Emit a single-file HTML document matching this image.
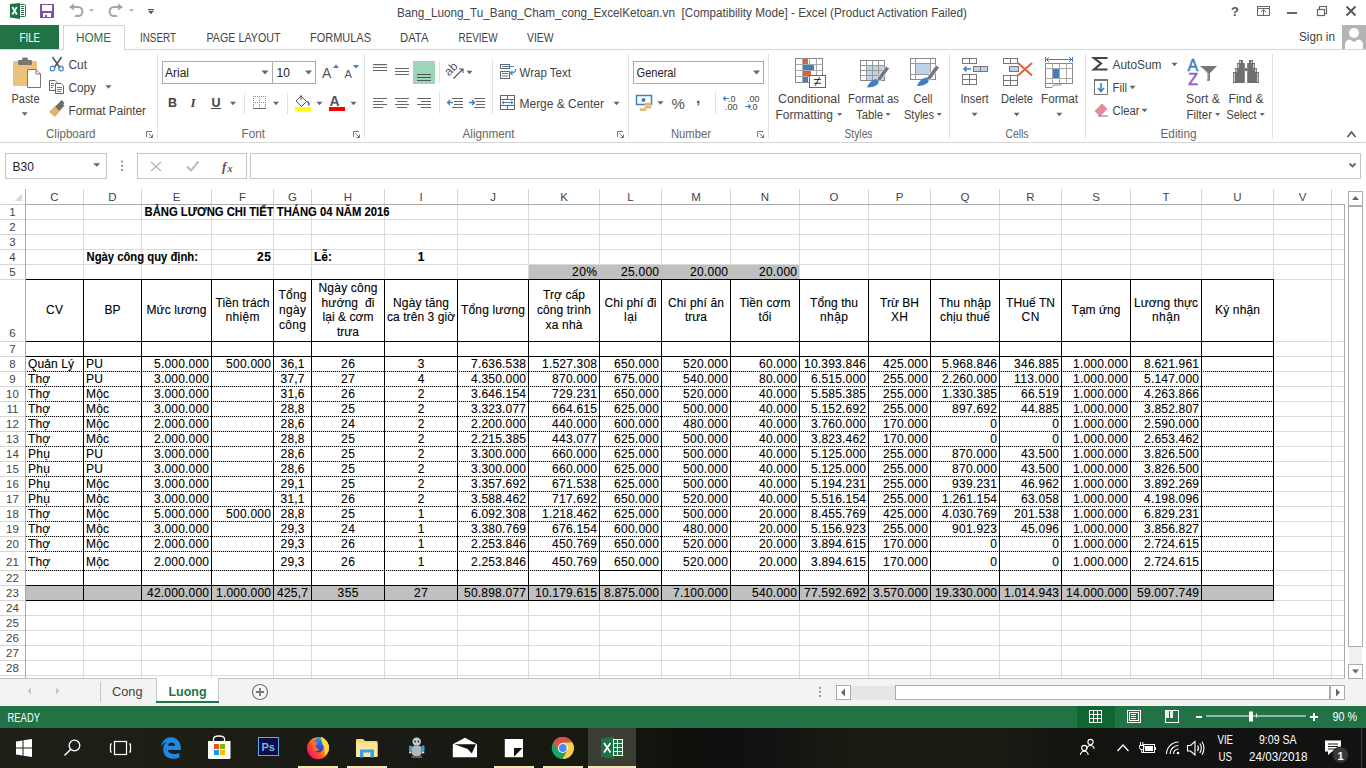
<!DOCTYPE html>
<html><head><meta charset="utf-8"><title>Excel</title>
<style>
html,body{margin:0;padding:0;width:1366px;height:768px;overflow:hidden;background:#fff}
svg{display:block;font-family:"Liberation Sans",sans-serif}
.c text{stroke:#000;stroke-width:0.1px}
</style></head><body>
<svg width="1366" height="768" viewBox="0 0 1366 768">
<rect x="0" y="0" width="1366" height="143" fill="#ffffff" />
<rect x="15.5" y="4.5" width="5" height="12" rx="1" fill="#fff" stroke="#1e7145" stroke-width="1"/>
<rect x="19.5" y="4.5" width="6" height="12" rx="1" fill="#fff" stroke="#1e7145" stroke-width="1"/>
<path d="M21 6.5h3M21 8.5h3M21 10.5h3M21 12.5h3M21 14.5h3" stroke="#1e7145" stroke-width="1"/>
<path d="M10 4 L20 3 V19 L10 17.5 Z" fill="#1e7145"/>
<path d="M12.3 7 L16.8 14.5 M16.8 7 L12.3 14.5" stroke="#fff" stroke-width="1.8"/>
<rect x="40" y="4" width="14" height="14" fill="#8150a8" />
<rect x="42" y="5" width="10" height="6" fill="#fff" />
<rect x="43" y="13" width="8" height="4" fill="#fff" />
<rect x="45" y="15" width="2" height="2" fill="#8150a8" />
<path d="M72 7 H78 A4.5 4.5 0 0 1 78 16 H75" fill="none" stroke="#a6a6a6" stroke-width="2"/>
<path d="M69 7 L74 3.5 L74 10.5 Z" fill="#a6a6a6"/>
<path d="M89.0 9.0 L94.0 9.0 L91.5 12.0 Z" fill="#b3b3b3"/>
<path d="M120 7 H114 A4.5 4.5 0 0 0 114 16 H117" fill="none" stroke="#a6a6a6" stroke-width="2"/>
<path d="M123 7 L118 3.5 L118 10.5 Z" fill="#a6a6a6"/>
<path d="M129.0 9.0 L134.0 9.0 L131.5 12.0 Z" fill="#b3b3b3"/>
<rect x="148" y="9" width="6" height="1" fill="#555" />
<path d="M148.0 10.75 L154.0 10.75 L151 14.25 Z" fill="#555"/>
<text x="397" y="17" font-size="12.5" fill="#444" textLength="570" lengthAdjust="spacingAndGlyphs" >Bang_Luong_Tu_Bang_Cham_cong_ExcelKetoan.vn  [Compatibility Mode] - Excel (Product Activation Failed)</text>
<text x="1235" y="16" font-size="13" fill="#555" text-anchor="middle" font-weight="bold" >?</text>
<rect x="1257.5" y="6.5" width="12" height="9" fill="none" stroke="#666" stroke-width="1"/>
<path d="M1257.5 8.5 H1269.5" stroke="#666"/>
<path d="M1263.5 15 V10 M1261 12 L1263.5 9.5 L1266 12" fill="none" stroke="#666"/>
<rect x="1287" y="12" width="10" height="2" fill="#666" />
<rect x="1317.5" y="9.5" width="7" height="6" fill="none" stroke="#666" stroke-width="1.2"/>
<path d="M1319.5 9.5 V6.5 H1326.5 V13.5 H1324.5" fill="none" stroke="#666" stroke-width="1.2"/>
<path d="M1346.5 6.5 L1355.5 15.5 M1355.5 6.5 L1346.5 15.5" stroke="#555" stroke-width="1.8"/>
<rect x="0" y="25" width="59" height="25" fill="#217346" />
<text x="19.5" y="42" font-size="12" fill="#fff" textLength="20.5" lengthAdjust="spacingAndGlyphs" >FILE</text>
<rect x="0" y="49" width="1366" height="1" fill="#d5d5d5" />
<rect x="63" y="25" width="62" height="25" fill="#fff" />
<rect x="63" y="25" width="1" height="25" fill="#d5d5d5" />
<rect x="124" y="25" width="1" height="25" fill="#d5d5d5" />
<rect x="63" y="25" width="62" height="1" fill="#d5d5d5" />
<text x="76" y="42" font-size="12" fill="#217346" textLength="35" lengthAdjust="spacingAndGlyphs" >HOME</text>
<text x="140" y="42" font-size="12" fill="#444" textLength="36" lengthAdjust="spacingAndGlyphs" >INSERT</text>
<text x="206.5" y="42" font-size="12" fill="#444" textLength="74.0" lengthAdjust="spacingAndGlyphs" >PAGE LAYOUT</text>
<text x="310" y="42" font-size="12" fill="#444" textLength="61" lengthAdjust="spacingAndGlyphs" >FORMULAS</text>
<text x="400" y="42" font-size="12" fill="#444" textLength="28.5" lengthAdjust="spacingAndGlyphs" >DATA</text>
<text x="458.5" y="42" font-size="12" fill="#444" textLength="39.0" lengthAdjust="spacingAndGlyphs" >REVIEW</text>
<text x="527" y="42" font-size="12" fill="#444" textLength="26.5" lengthAdjust="spacingAndGlyphs" >VIEW</text>
<text x="1299" y="41" font-size="12" fill="#444" textLength="36" lengthAdjust="spacingAndGlyphs" >Sign in</text>
<rect x="1342" y="25" width="24" height="24" fill="#b4b4b4" />
<circle cx="1354" cy="33" r="5" fill="#fff"/>
<path d="M1345 49 V45 Q1345 40 1350 39.5 L1354 42 L1358 39.5 Q1363 40 1363 45 V49 Z" fill="#fff"/>
<rect x="0" y="142" width="1366" height="1" fill="#d5d5d5" />
<rect x="157" y="54" width="1" height="85" fill="#e1e1e1" />
<rect x="364" y="54" width="1" height="85" fill="#e1e1e1" />
<rect x="628" y="54" width="1" height="85" fill="#e1e1e1" />
<rect x="768" y="54" width="1" height="85" fill="#e1e1e1" />
<rect x="949" y="54" width="1" height="85" fill="#e1e1e1" />
<rect x="1085" y="54" width="1" height="85" fill="#e1e1e1" />
<rect x="1272" y="54" width="1" height="85" fill="#e1e1e1" />
<text x="46" y="137.5" font-size="12" fill="#666" textLength="49.5" lengthAdjust="spacingAndGlyphs" >Clipboard</text>
<text x="241.5" y="137.5" font-size="12" fill="#666" textLength="23.5" lengthAdjust="spacingAndGlyphs" >Font</text>
<text x="462.5" y="137.5" font-size="12" fill="#666" textLength="52.0" lengthAdjust="spacingAndGlyphs" >Alignment</text>
<text x="671" y="137.5" font-size="12" fill="#666" textLength="40" lengthAdjust="spacingAndGlyphs" >Number</text>
<text x="844.5" y="137.5" font-size="12" fill="#666" textLength="28.0" lengthAdjust="spacingAndGlyphs" >Styles</text>
<text x="1005.5" y="137.5" font-size="12" fill="#666" textLength="23.0" lengthAdjust="spacingAndGlyphs" >Cells</text>
<text x="1160.5" y="137.5" font-size="12" fill="#666" textLength="36.0" lengthAdjust="spacingAndGlyphs" >Editing</text>
<path d="M146.5 137 V131.5 H152" fill="none" stroke="#777"/>
<path d="M148.5 133.5 L152.5 137.5 M152.5 134.5 V137.5 H149.5" fill="none" stroke="#777"/>
<path d="M353.5 137 V131.5 H359" fill="none" stroke="#777"/>
<path d="M355.5 133.5 L359.5 137.5 M359.5 134.5 V137.5 H356.5" fill="none" stroke="#777"/>
<path d="M617.5 137 V131.5 H623" fill="none" stroke="#777"/>
<path d="M619.5 133.5 L623.5 137.5 M623.5 134.5 V137.5 H620.5" fill="none" stroke="#777"/>
<path d="M757.5 137 V131.5 H763" fill="none" stroke="#777"/>
<path d="M759.5 133.5 L763.5 137.5 M763.5 134.5 V137.5 H760.5" fill="none" stroke="#777"/>
<path d="M1347.5 137 L1351.5 132 L1355.5 137" fill="none" stroke="#555" stroke-width="1.6"/>
<rect x="13" y="61" width="24" height="25" rx="1.5" fill="#ebc27a"/>
<rect x="18" y="60" width="14" height="5" rx="1" fill="#777"/>
<rect x="22" y="57.5" width="6" height="4" rx="1.5" fill="#777"/>
<path d="M27.5 69.5 H36 L40.5 74 V87.5 H27.5 Z" fill="#fff" stroke="#777" stroke-width="1"/>
<path d="M36 69.5 V74 H40.5" fill="none" stroke="#777" stroke-width="1"/>
<text x="11.5" y="103" font-size="12" fill="#444" textLength="28" lengthAdjust="spacingAndGlyphs" >Paste</text>
<path d="M21.7 112.25 L27.7 112.25 L24.7 115.75 Z" fill="#666"/>
<path d="M52.5 57 L60 68 M61.5 57 L54 68" stroke="#555" stroke-width="1.6"/>
<circle cx="52.5" cy="68.5" r="2.3" fill="none" stroke="#4a86c5" stroke-width="1.2"/>
<circle cx="61" cy="68.5" r="2.3" fill="none" stroke="#4a86c5" stroke-width="1.2"/>
<text x="68.5" y="69" font-size="12" fill="#444" textLength="18.5" lengthAdjust="spacingAndGlyphs" >Cut</text>
<path d="M49.5 80.5 H55 L57 82.5 V90.5 H49.5 Z" fill="#fff" stroke="#666"/>
<path d="M55.5 83.5 H61 L63.5 86 V93.5 H55.5 Z" fill="#fff" stroke="#666"/>
<path d="M51 83.5h3M51 85.5h3M51 87.5h2M57 87.5h5M57 89.5h5M57 91.5h4" stroke="#3d7fc1"/>
<text x="68.5" y="92" font-size="12" fill="#444" textLength="27.5" lengthAdjust="spacingAndGlyphs" >Copy</text>
<path d="M105.5 85.25 L111.5 85.25 L108.5 88.75 Z" fill="#666"/>
<path d="M49 112 L55 106 L60 111 L55 117 Z" fill="#e0b26b"/>
<path d="M55 106.5 L60.5 101.5 L64.5 105.5 L59.5 111 Z" fill="#6b6b6b"/>
<rect x="60" y="101" width="4" height="3" transform="rotate(45 62 102.5)" fill="#6b6b6b"/>
<text x="68.5" y="115" font-size="12" fill="#444" textLength="77.5" lengthAdjust="spacingAndGlyphs" >Format Painter</text>
<rect x="162.5" y="61.5" width="110" height="22" fill="#fff" stroke="#ababab"/>
<rect x="272.5" y="61.5" width="43" height="22" fill="#fff" stroke="#ababab"/>
<text x="165" y="77" font-size="12" fill="#222" >Arial</text>
<path d="M261.5 70.5 L268.5 70.5 L265 74.5 Z" fill="#666"/>
<text x="276.5" y="77" font-size="12" fill="#222" >10</text>
<path d="M305.0 70.5 L312.0 70.5 L308.5 74.5 Z" fill="#666"/>
<text x="322" y="78" font-size="14" fill="#555" >A</text>
<path d="M333 68 L336 64.5 L339 68 Z" fill="#3d7fc1"/>
<text x="344.5" y="78" font-size="11" fill="#555" >A</text>
<path d="M353 65 L359 65 L356 68.5 Z" fill="#3d7fc1"/>
<text x="168" y="107" font-size="12.5" fill="#444" font-weight="bold" >B</text>
<text x="190.5" y="107" font-size="13" fill="#444" font-weight="bold" font-family="Liberation Serif" font-style="italic">I</text>
<text x="211.5" y="107" font-size="12.5" fill="#444" font-weight="bold" >U</text>
<rect x="211" y="108" width="10" height="1" fill="#444" />
<path d="M230.0 101.75 L236.0 101.75 L233 105.25 Z" fill="#666"/>
<rect x="244" y="93" width="1" height="21" fill="#e1e1e1" />
<path d="M253 96h1v1h-1z M253 96h1v1h-1z M265 96h1v1h-1z M259 96h1v1h-1z M253 102h1v1h-1z M255 96h1v1h-1z M253 98h1v1h-1z M265 98h1v1h-1z M259 98h1v1h-1z M255 102h1v1h-1z M257 96h1v1h-1z M253 100h1v1h-1z M265 100h1v1h-1z M259 100h1v1h-1z M257 102h1v1h-1z M259 96h1v1h-1z M253 102h1v1h-1z M265 102h1v1h-1z M259 102h1v1h-1z M259 102h1v1h-1z M261 96h1v1h-1z M253 104h1v1h-1z M265 104h1v1h-1z M259 104h1v1h-1z M261 102h1v1h-1z M263 96h1v1h-1z M253 106h1v1h-1z M265 106h1v1h-1z M259 106h1v1h-1z M263 102h1v1h-1z M265 96h1v1h-1z M253 108h1v1h-1z M265 108h1v1h-1z M259 108h1v1h-1z M265 102h1v1h-1z" fill="#888"/>
<rect x="253" y="108" width="13" height="1" fill="#666" />
<path d="M273.0 101.75 L279.0 101.75 L276 105.25 Z" fill="#666"/>
<rect x="287" y="93" width="1" height="21" fill="#e1e1e1" />
<path d="M296 101 L301 96 L306.5 101.5 L301.5 106.5 Z" fill="#fff" stroke="#555" stroke-width="1"/>
<path d="M301 95 V100" stroke="#555"/>
<path d="M307 101 Q310 103 308.5 105.5" fill="#3d7fc1" stroke="#3d7fc1" stroke-width="1.5"/>
<rect x="295" y="107" width="16" height="4" fill="#ffff00" />
<path d="M316.5 101.75 L322.5 101.75 L319.5 105.25 Z" fill="#666"/>
<text x="329.5" y="106" font-size="14" fill="#555" font-weight="bold" >A</text>
<rect x="329" y="107" width="16" height="4" fill="#ff0000" />
<path d="M350.5 101.75 L356.5 101.75 L353.5 105.25 Z" fill="#666"/>
<rect x="373" y="64" width="14" height="1" fill="#666" />
<rect x="373" y="67" width="14" height="1" fill="#666" />
<rect x="373" y="70" width="14" height="1" fill="#666" />
<rect x="373" y="64" width="14" height="1.2" fill="#666" />
<rect x="395" y="68" width="14" height="1" fill="#666" />
<rect x="395" y="71" width="14" height="1" fill="#666" />
<rect x="395" y="74" width="14" height="1" fill="#666" />
<rect x="413" y="61" width="22" height="23" fill="#9fd5b7" />
<rect x="417" y="74" width="14" height="1" fill="#555" />
<rect x="417" y="77" width="14" height="1" fill="#555" />
<rect x="417" y="80" width="14" height="1" fill="#555" />
<rect x="439" y="61" width="1" height="22" fill="#e1e1e1" />
<text x="0" y="0" font-size="12" fill="#555" transform="translate(449 76.5) rotate(-45)">ab</text>
<path d="M453.5 78.5 L462.5 69.5 M459 69 H463 V73" fill="none" stroke="#555" stroke-width="1.1"/>
<path d="M466.5 70.75 L472.5 70.75 L469.5 74.25 Z" fill="#666"/>
<rect x="492" y="60" width="1" height="54" fill="#e1e1e1" />
<rect x="500.5" y="64.5" width="9" height="4" fill="#fff" stroke="#666"/>
<rect x="500.5" y="71.5" width="9" height="7" fill="#fff" stroke="#666"/>
<rect x="502" y="66" width="12" height="1" fill="#3d7fc1" />
<rect x="502" y="73" width="6" height="1" fill="#3d7fc1" />
<rect x="502" y="75.5" width="6" height="1" fill="#3d7fc1" />
<path d="M515.5 69 Q516 73 510.5 73 M512.5 71 L510.5 73 L512.5 75" fill="none" stroke="#3d7fc1" stroke-width="1.1"/>
<text x="519.5" y="77" font-size="12" fill="#444" textLength="51.5" lengthAdjust="spacingAndGlyphs" >Wrap Text</text>
<rect x="373" y="98" width="14" height="1" fill="#666" />
<rect x="373" y="101" width="10" height="1" fill="#666" />
<rect x="373" y="104" width="14" height="1" fill="#666" />
<rect x="373" y="107" width="10" height="1" fill="#666" />
<rect x="395" y="98" width="14" height="1" fill="#666" />
<rect x="397" y="101" width="10" height="1" fill="#666" />
<rect x="395" y="104" width="14" height="1" fill="#666" />
<rect x="397" y="107" width="10" height="1" fill="#666" />
<rect x="417" y="98" width="14" height="1" fill="#666" />
<rect x="421" y="101" width="10" height="1" fill="#666" />
<rect x="417" y="104" width="14" height="1" fill="#666" />
<rect x="421" y="107" width="10" height="1" fill="#666" />
<rect x="439" y="92" width="1" height="21" fill="#e1e1e1" />
<rect x="452" y="98" width="11" height="1" fill="#666" />
<rect x="454" y="101" width="9" height="1" fill="#666" />
<rect x="454" y="104" width="9" height="1" fill="#666" />
<rect x="452" y="107" width="11" height="1" fill="#666" />
<path d="M453 102.5 H447.5 M450 100 L447.5 102.5 L450 105" fill="none" stroke="#3d7fc1" stroke-width="1.3"/>
<rect x="474" y="98" width="11" height="1" fill="#666" />
<rect x="476" y="101" width="9" height="1" fill="#666" />
<rect x="476" y="104" width="9" height="1" fill="#666" />
<rect x="474" y="107" width="11" height="1" fill="#666" />
<path d="M469 102.5 H474.5 M472 100 L474.5 102.5 L472 105" fill="none" stroke="#3d7fc1" stroke-width="1.3"/>
<rect x="500.5" y="95.5" width="14" height="14" fill="#fff" stroke="#666"/>
<path d="M500.5 99.5 H514.5 M500.5 105.5 H514.5 M507.5 95.5 V99.5 M507.5 105.5 V109.5" fill="none" stroke="#666"/>
<path d="M502 102.5 H513 M504 100.8 L502 102.5 L504 104.2 M511 100.8 L513 102.5 L511 104.2" fill="none" stroke="#3d7fc1"/>
<text x="519.5" y="107.5" font-size="12" fill="#444" textLength="84.5" lengthAdjust="spacingAndGlyphs" >Merge &amp; Center</text>
<path d="M613.5 101.75 L619.5 101.75 L616.5 105.25 Z" fill="#666"/>
<rect x="633.5" y="61.5" width="130" height="22" fill="#fff" stroke="#ababab"/>
<text x="636.5" y="77" font-size="12" fill="#222" textLength="39.5" lengthAdjust="spacingAndGlyphs" >General</text>
<path d="M753.0 70.5 L760.0 70.5 L756.5 74.5 Z" fill="#666"/>
<rect x="636.5" y="95.5" width="15" height="9" fill="#fff" stroke="#3d7fc1" stroke-width="1.5"/>
<circle cx="643.5" cy="100" r="2" fill="#3d7fc1"/>
<ellipse cx="648" cy="104" rx="3.5" ry="1.5" fill="#e8b86a"/>
<ellipse cx="648" cy="107" rx="3.5" ry="1.5" fill="#e8b86a"/>
<ellipse cx="643" cy="109.5" rx="3.5" ry="1.5" fill="#e8b86a"/>
<path d="M657.5 101.25 L663.5 101.25 L660.5 104.75 Z" fill="#666"/>
<text x="671.5" y="109" font-size="15" fill="#555" >%</text>
<text x="696" y="103" font-size="15" fill="#555" font-weight="bold" >,</text>
<rect x="715" y="92" width="1" height="22" fill="#e1e1e1" />
<text x="728" y="101.5" font-size="9" fill="#444" >.0</text>
<text x="725" y="109.5" font-size="9" fill="#444" >.00</text>
<path d="M729 98.5 H723.5 M725.5 96.5 L723.5 98.5 L725.5 100.5" fill="none" stroke="#3d7fc1" stroke-width="1.2"/>
<text x="747" y="101.5" font-size="9" fill="#444" >.00</text>
<text x="750" y="109.5" font-size="9" fill="#444" >.0</text>
<path d="M745 106.5 H750.5 M748.5 104.5 L750.5 106.5 L748.5 108.5" fill="none" stroke="#3d7fc1" stroke-width="1.2"/>
<rect x="795.5" y="58.5" width="27" height="24" fill="#fff" stroke="#888"/>
<path d="M795.5 64.5 H822.5 M795.5 70.5 H822.5 M795.5 76.5 H822.5 M802.5 58.5 V82.5 M809.5 58.5 V82.5 M816.5 58.5 V82.5" stroke="#aaa" fill="none"/>
<rect x="803" y="59" width="5" height="5" fill="#e0603c" />
<rect x="803" y="65" width="11" height="5" fill="#3d7fc1" />
<rect x="803" y="71" width="8" height="5" fill="#e0603c" />
<rect x="803" y="77" width="5" height="5" fill="#3d7fc1" />
<rect x="809.5" y="75.5" width="16" height="12" fill="#fff" stroke="#666"/>
<text x="817.5" y="86" font-size="14" fill="#333" text-anchor="middle" >≠</text>
<text x="778" y="102.5" font-size="12" fill="#444" textLength="62" lengthAdjust="spacingAndGlyphs" >Conditional</text>
<text x="775.5" y="118.5" font-size="12" fill="#444" textLength="57.5" lengthAdjust="spacingAndGlyphs" >Formatting</text>
<path d="M837.2 113.0 L842.2 113.0 L839.7 116.0 Z" fill="#666"/>
<rect x="860.5" y="60.5" width="24" height="20" fill="#fff" stroke="#888"/>
<rect x="866" y="66" width="18" height="14" fill="#bcd3ea" />
<path d="M860.5 65.5 H884.5 M860.5 70.5 H884.5 M860.5 75.5 H884.5 M866.5 60.5 V80.5 M872.5 60.5 V80.5 M878.5 60.5 V80.5" stroke="#999" fill="none"/>
<path d="M876.5 79 L886 66 L889.5 68.5 L880 81.5 Z" fill="#777" stroke="#fff" stroke-width="0.8"/>
<path d="M867 87.5 Q870 80 876 79 Q880 80 878 84 Q874 87.5 867 87.5 Z" fill="#3d7fc1"/>
<text x="848" y="102.5" font-size="12" fill="#444" textLength="51" lengthAdjust="spacingAndGlyphs" >Format as</text>
<text x="856" y="118.5" font-size="12" fill="#444" textLength="27" lengthAdjust="spacingAndGlyphs" >Table</text>
<path d="M885.5 113.0 L890.5 113.0 L888 116.0 Z" fill="#666"/>
<rect x="910.5" y="58.5" width="25" height="21" fill="#fff" stroke="#888"/>
<rect x="916" y="64" width="14" height="10" fill="#bcd3ea" />
<path d="M910.5 63.5 H935.5 M910.5 74.5 H935.5 M915.5 58.5 V79.5 M930.5 58.5 V79.5" stroke="#999" fill="none"/>
<path d="M926.5 78 L936 65 L939.5 67.5 L930 80.5 Z" fill="#777" stroke="#fff" stroke-width="0.8"/>
<path d="M917 86 Q920 78.5 926 77.5 Q930 78.5 928 82.5 Q924 86 917 86 Z" fill="#3d7fc1"/>
<text x="913.5" y="102.5" font-size="12" fill="#444" textLength="19" lengthAdjust="spacingAndGlyphs" >Cell</text>
<text x="904" y="118.5" font-size="12" fill="#444" textLength="30" lengthAdjust="spacingAndGlyphs" >Styles</text>
<path d="M936.8 113.0 L941.8 113.0 L939.3 116.0 Z" fill="#666"/>
<rect x="962.5" y="58.5" width="14" height="5" fill="#fff" stroke="#777"/>
<path d="M969.5 58.5 V63.5" stroke="#777"/>
<rect x="973.5" y="66.5" width="14" height="5" fill="#bcd3ea" stroke="#777"/>
<path d="M980.5 66.5 V71.5" stroke="#777"/>
<path d="M971 69 H964 M966.5 66.5 L964 69 L966.5 71.5" fill="none" stroke="#3d7fc1" stroke-width="1.5"/>
<rect x="962.5" y="74.5" width="14" height="10" fill="#fff" stroke="#777"/>
<path d="M969.5 74.5 V84.5 M962.5 79.5 H976.5" stroke="#777"/>
<text x="960.5" y="102.5" font-size="12" fill="#444" textLength="28" lengthAdjust="spacingAndGlyphs" >Insert</text>
<path d="M971.6 112.75 L977.6 112.75 L974.6 116.25 Z" fill="#666"/>
<rect x="1003.5" y="58.5" width="14" height="5" fill="#fff" stroke="#777"/>
<path d="M1010.5 58.5 V63.5" stroke="#777"/>
<rect x="1009.5" y="66.5" width="9" height="5" fill="#bcd3ea" stroke="#777"/>
<rect x="1003.5" y="75.5" width="14" height="10" fill="#fff" stroke="#777"/>
<path d="M1010.5 75.5 V85.5 M1003.5 80.5 H1017.5" stroke="#777"/>
<path d="M1018 63 L1032 75.5 M1032 63 L1018 75.5" stroke="#e0603c" stroke-width="2"/>
<text x="1001" y="102.5" font-size="12" fill="#444" textLength="32" lengthAdjust="spacingAndGlyphs" >Delete</text>
<path d="M1013.7 112.75 L1019.7 112.75 L1016.7 116.25 Z" fill="#666"/>
<path d="M1045.5 57 V62 M1072.5 57 V62 M1046 59.5 H1072 M1049 57 L1046.5 59.5 L1049 62 M1069 57 L1071.5 59.5 L1069 62" fill="none" stroke="#3d7fc1" stroke-width="1"/>
<rect x="1045.5" y="63.5" width="27" height="20" fill="#fff" stroke="#888"/>
<path d="M1045.5 68.5 H1072.5 M1045.5 78.5 H1072.5 M1052.5 63.5 V83.5 M1059.5 63.5 V83.5 M1066.5 63.5 V83.5" stroke="#aaa" fill="none"/>
<rect x="1053" y="69" width="6" height="9" fill="#3d7fc1" />
<path d="M1045.5 83.5 V87.5 H1052 L1054 85 H1060 L1062 83.5" fill="none" stroke="#888"/>
<text x="1041" y="102.5" font-size="12" fill="#444" textLength="37" lengthAdjust="spacingAndGlyphs" >Format</text>
<path d="M1056.3 112.75 L1062.3 112.75 L1059.3 116.25 Z" fill="#666"/>
<path d="M1107.5 58 H1094 L1101 63.5 L1094 69.5 H1107.5" fill="none" stroke="#444" stroke-width="2.2"/>
<text x="1112.5" y="68.5" font-size="12" fill="#444" textLength="49" lengthAdjust="spacingAndGlyphs" >AutoSum</text>
<path d="M1171.5 62.75 L1177.5 62.75 L1174.5 66.25 Z" fill="#666"/>
<rect x="1094.5" y="79.5" width="13" height="15" fill="#fff" stroke="#777"/>
<rect x="1094" y="79" width="14" height="2" fill="#777" />
<path d="M1101 83 V91 M1098 88 L1101 91.5 L1104 88" fill="none" stroke="#3d7fc1" stroke-width="1.6"/>
<text x="1112.5" y="91.5" font-size="12" fill="#444" textLength="14.5" lengthAdjust="spacingAndGlyphs" >Fill</text>
<path d="M1129.5 85.75 L1135.5 85.75 L1132.5 89.25 Z" fill="#666"/>
<path d="M1094.5 111 L1102 103.5 L1107.5 109 L1100 116.5 Z" fill="#e8899a"/>
<rect x="1098" y="115.5" width="10" height="1" fill="#777" />
<text x="1112.5" y="114.5" font-size="12" fill="#444" textLength="27" lengthAdjust="spacingAndGlyphs" >Clear</text>
<path d="M1141.5 108.75 L1147.5 108.75 L1144.5 112.25 Z" fill="#666"/>
<text x="1187.5" y="71" font-size="16" fill="#3d7fc1" stroke="#3d7fc1" stroke-width="0.5">A</text>
<text x="1188.3" y="84.8" font-size="16" fill="#9b59c6" stroke="#9b59c6" stroke-width="0.5">Z</text>
<path d="M1200 66 H1217 L1210 73 V80.7 H1207 V73 Z" fill="#777"/>
<path d="M1202 67.5 L1207.8 73.3 V79.5" fill="none" stroke="#fff" stroke-width="0.8"/>
<text x="1186" y="102.5" font-size="12" fill="#444" textLength="34" lengthAdjust="spacingAndGlyphs" >Sort &amp;</text>
<text x="1186.5" y="118.5" font-size="12" fill="#444" textLength="25.5" lengthAdjust="spacingAndGlyphs" >Filter</text>
<path d="M1215.1 113.0 L1220.1 113.0 L1217.6 116.0 Z" fill="#666"/>
<path d="M1239 60 H1243 V63 H1244.8 V83 H1233 V72 H1235 V68 H1237 V63 H1239 Z" fill="#6f6f6f"/>
<path d="M1253 60 H1249 V63 H1247.2 V83 H1259 V72 H1257 V68 H1255 V63 H1253 Z" fill="#6f6f6f"/>
<rect x="1244.8" y="68" width="2.4" height="3" fill="#6f6f6f" />
<path d="M1234.3 73 V82 M1257.7 73 V82 M1236.3 69 V72 M1255.7 69 V72 M1238.3 64 V68 M1253.7 64 V68 M1240.3 61 V63 M1251.7 61 V63" stroke="#fff" stroke-width="0.8"/>
<text x="1228.5" y="102.5" font-size="12" fill="#444" textLength="35" lengthAdjust="spacingAndGlyphs" >Find &amp;</text>
<text x="1226.5" y="118.5" font-size="12" fill="#444" textLength="30" lengthAdjust="spacingAndGlyphs" >Select</text>
<path d="M1259.8 113.0 L1264.8 113.0 L1262.3 116.0 Z" fill="#666"/>
<rect x="5.5" y="153.5" width="101" height="25" fill="#fff" stroke="#c6c6c6"/>
<text x="12.5" y="170.5" font-size="12" fill="#222" >B30</text>
<path d="M93.2 163.25 L100.2 163.25 L96.7 166.75 Z" fill="#666"/>
<rect x="121" y="160.5" width="2" height="2" fill="#999" />
<rect x="121" y="164.8" width="2" height="2" fill="#999" />
<rect x="121" y="169" width="2" height="2" fill="#999" />
<rect x="137.5" y="153.5" width="109" height="25" fill="#fff" stroke="#c6c6c6"/>
<path d="M151 162 L161 171 M161 162 L151 171" stroke="#bbb" stroke-width="1.4"/>
<path d="M187 166.5 L191 170.5 L198.5 161.5" fill="none" stroke="#bbb" stroke-width="2"/>
<text x="222" y="171" font-size="13" fill="#555" font-family="Liberation Serif" font-style="italic" font-weight="bold">f</text>
<text x="227.5" y="171.5" font-size="10" fill="#555" font-family="Liberation Serif" font-style="italic" font-weight="bold">x</text>
<rect x="250.5" y="153.5" width="1110" height="25" fill="#fff" stroke="#c6c6c6"/>
<path d="M1349.5 163.5 L1352.5 166.5 L1355.5 163.5" fill="none" stroke="#666" stroke-width="1.8"/>
<rect x="0" y="189" width="1344" height="15" fill="#fff" />
<rect x="83" y="189" width="1" height="15" fill="#d6d6d6" />
<rect x="141" y="189" width="1" height="15" fill="#d6d6d6" />
<rect x="211" y="189" width="1" height="15" fill="#d6d6d6" />
<rect x="273" y="189" width="1" height="15" fill="#d6d6d6" />
<rect x="311" y="189" width="1" height="15" fill="#d6d6d6" />
<rect x="384" y="189" width="1" height="15" fill="#d6d6d6" />
<rect x="457" y="189" width="1" height="15" fill="#d6d6d6" />
<rect x="528" y="189" width="1" height="15" fill="#d6d6d6" />
<rect x="599" y="189" width="1" height="15" fill="#d6d6d6" />
<rect x="661" y="189" width="1" height="15" fill="#d6d6d6" />
<rect x="730" y="189" width="1" height="15" fill="#d6d6d6" />
<rect x="799" y="189" width="1" height="15" fill="#d6d6d6" />
<rect x="868" y="189" width="1" height="15" fill="#d6d6d6" />
<rect x="930" y="189" width="1" height="15" fill="#d6d6d6" />
<rect x="999" y="189" width="1" height="15" fill="#d6d6d6" />
<rect x="1061" y="189" width="1" height="15" fill="#d6d6d6" />
<rect x="1130" y="189" width="1" height="15" fill="#d6d6d6" />
<rect x="1201" y="189" width="1" height="15" fill="#d6d6d6" />
<rect x="1273" y="189" width="1" height="15" fill="#d6d6d6" />
<rect x="1331" y="189" width="1" height="15" fill="#d6d6d6" />
<text x="54.5" y="201" font-size="11.5" fill="#444" text-anchor="middle" >C</text>
<text x="112.5" y="201" font-size="11.5" fill="#444" text-anchor="middle" >D</text>
<text x="176.5" y="201" font-size="11.5" fill="#444" text-anchor="middle" >E</text>
<text x="242.5" y="201" font-size="11.5" fill="#444" text-anchor="middle" >F</text>
<text x="292.5" y="201" font-size="11.5" fill="#444" text-anchor="middle" >G</text>
<text x="348.0" y="201" font-size="11.5" fill="#444" text-anchor="middle" >H</text>
<text x="421.0" y="201" font-size="11.5" fill="#444" text-anchor="middle" >I</text>
<text x="493.0" y="201" font-size="11.5" fill="#444" text-anchor="middle" >J</text>
<text x="564.0" y="201" font-size="11.5" fill="#444" text-anchor="middle" >K</text>
<text x="630.5" y="201" font-size="11.5" fill="#444" text-anchor="middle" >L</text>
<text x="696.0" y="201" font-size="11.5" fill="#444" text-anchor="middle" >M</text>
<text x="765.0" y="201" font-size="11.5" fill="#444" text-anchor="middle" >N</text>
<text x="834.0" y="201" font-size="11.5" fill="#444" text-anchor="middle" >O</text>
<text x="899.5" y="201" font-size="11.5" fill="#444" text-anchor="middle" >P</text>
<text x="965.0" y="201" font-size="11.5" fill="#444" text-anchor="middle" >Q</text>
<text x="1030.5" y="201" font-size="11.5" fill="#444" text-anchor="middle" >R</text>
<text x="1096.0" y="201" font-size="11.5" fill="#444" text-anchor="middle" >S</text>
<text x="1166.0" y="201" font-size="11.5" fill="#444" text-anchor="middle" >T</text>
<text x="1237.5" y="201" font-size="11.5" fill="#444" text-anchor="middle" >U</text>
<text x="1302.5" y="201" font-size="11.5" fill="#444" text-anchor="middle" >V</text>
<path d="M22 193.5 L22 201 L14.5 201 Z" fill="#dcdcdc"/>
<rect x="83" y="204" width="1" height="474" fill="#dadada" />
<rect x="141" y="204" width="1" height="474" fill="#dadada" />
<rect x="211" y="204" width="1" height="474" fill="#dadada" />
<rect x="273" y="204" width="1" height="474" fill="#dadada" />
<rect x="311" y="204" width="1" height="474" fill="#dadada" />
<rect x="384" y="204" width="1" height="474" fill="#dadada" />
<rect x="457" y="204" width="1" height="474" fill="#dadada" />
<rect x="528" y="204" width="1" height="474" fill="#dadada" />
<rect x="599" y="204" width="1" height="474" fill="#dadada" />
<rect x="661" y="204" width="1" height="474" fill="#dadada" />
<rect x="730" y="204" width="1" height="474" fill="#dadada" />
<rect x="799" y="204" width="1" height="474" fill="#dadada" />
<rect x="868" y="204" width="1" height="474" fill="#dadada" />
<rect x="930" y="204" width="1" height="474" fill="#dadada" />
<rect x="999" y="204" width="1" height="474" fill="#dadada" />
<rect x="1061" y="204" width="1" height="474" fill="#dadada" />
<rect x="1130" y="204" width="1" height="474" fill="#dadada" />
<rect x="1201" y="204" width="1" height="474" fill="#dadada" />
<rect x="1273" y="204" width="1" height="474" fill="#dadada" />
<rect x="1331" y="204" width="1" height="474" fill="#dadada" />
<rect x="25" y="219" width="1319" height="1" fill="#dadada" />
<rect x="25" y="234" width="1319" height="1" fill="#dadada" />
<rect x="25" y="249" width="1319" height="1" fill="#dadada" />
<rect x="25" y="264" width="1319" height="1" fill="#dadada" />
<rect x="25" y="279" width="1319" height="1" fill="#dadada" />
<rect x="25" y="341" width="1319" height="1" fill="#dadada" />
<rect x="25" y="356" width="1319" height="1" fill="#dadada" />
<rect x="25" y="371" width="1319" height="1" fill="#dadada" />
<rect x="25" y="386" width="1319" height="1" fill="#dadada" />
<rect x="25" y="401" width="1319" height="1" fill="#dadada" />
<rect x="25" y="416" width="1319" height="1" fill="#dadada" />
<rect x="25" y="431" width="1319" height="1" fill="#dadada" />
<rect x="25" y="446" width="1319" height="1" fill="#dadada" />
<rect x="25" y="461" width="1319" height="1" fill="#dadada" />
<rect x="25" y="476" width="1319" height="1" fill="#dadada" />
<rect x="25" y="491" width="1319" height="1" fill="#dadada" />
<rect x="25" y="506" width="1319" height="1" fill="#dadada" />
<rect x="25" y="521" width="1319" height="1" fill="#dadada" />
<rect x="25" y="536" width="1319" height="1" fill="#dadada" />
<rect x="25" y="551" width="1319" height="1" fill="#dadada" />
<rect x="25" y="570" width="1319" height="1" fill="#dadada" />
<rect x="25" y="585" width="1319" height="1" fill="#dadada" />
<rect x="25" y="600" width="1319" height="1" fill="#dadada" />
<rect x="25" y="615" width="1319" height="1" fill="#dadada" />
<rect x="25" y="630" width="1319" height="1" fill="#dadada" />
<rect x="25" y="645" width="1319" height="1" fill="#dadada" />
<rect x="25" y="660" width="1319" height="1" fill="#dadada" />
<rect x="25" y="675" width="1319" height="1" fill="#dadada" />
<rect x="0" y="219" width="25" height="1" fill="#d6d6d6" />
<rect x="0" y="234" width="25" height="1" fill="#d6d6d6" />
<rect x="0" y="249" width="25" height="1" fill="#d6d6d6" />
<rect x="0" y="264" width="25" height="1" fill="#d6d6d6" />
<rect x="0" y="279" width="25" height="1" fill="#d6d6d6" />
<rect x="0" y="341" width="25" height="1" fill="#d6d6d6" />
<rect x="0" y="356" width="25" height="1" fill="#d6d6d6" />
<rect x="0" y="371" width="25" height="1" fill="#d6d6d6" />
<rect x="0" y="386" width="25" height="1" fill="#d6d6d6" />
<rect x="0" y="401" width="25" height="1" fill="#d6d6d6" />
<rect x="0" y="416" width="25" height="1" fill="#d6d6d6" />
<rect x="0" y="431" width="25" height="1" fill="#d6d6d6" />
<rect x="0" y="446" width="25" height="1" fill="#d6d6d6" />
<rect x="0" y="461" width="25" height="1" fill="#d6d6d6" />
<rect x="0" y="476" width="25" height="1" fill="#d6d6d6" />
<rect x="0" y="491" width="25" height="1" fill="#d6d6d6" />
<rect x="0" y="506" width="25" height="1" fill="#d6d6d6" />
<rect x="0" y="521" width="25" height="1" fill="#d6d6d6" />
<rect x="0" y="536" width="25" height="1" fill="#d6d6d6" />
<rect x="0" y="551" width="25" height="1" fill="#d6d6d6" />
<rect x="0" y="570" width="25" height="1" fill="#d6d6d6" />
<rect x="0" y="585" width="25" height="1" fill="#d6d6d6" />
<rect x="0" y="600" width="25" height="1" fill="#d6d6d6" />
<rect x="0" y="615" width="25" height="1" fill="#d6d6d6" />
<rect x="0" y="630" width="25" height="1" fill="#d6d6d6" />
<rect x="0" y="645" width="25" height="1" fill="#d6d6d6" />
<rect x="0" y="660" width="25" height="1" fill="#d6d6d6" />
<rect x="0" y="675" width="25" height="1" fill="#d6d6d6" />
<text x="12.5" y="215.7" font-size="11.5" fill="#444" text-anchor="middle" >1</text>
<text x="12.5" y="230.7" font-size="11.5" fill="#444" text-anchor="middle" >2</text>
<text x="12.5" y="245.7" font-size="11.5" fill="#444" text-anchor="middle" >3</text>
<text x="12.5" y="260.7" font-size="11.5" fill="#444" text-anchor="middle" >4</text>
<text x="12.5" y="275.7" font-size="11.5" fill="#444" text-anchor="middle" >5</text>
<text x="12.5" y="337.2" font-size="11.5" fill="#444" text-anchor="middle" >6</text>
<text x="12.5" y="352.7" font-size="11.5" fill="#444" text-anchor="middle" >7</text>
<text x="12.5" y="367.7" font-size="11.5" fill="#444" text-anchor="middle" >8</text>
<text x="12.5" y="382.7" font-size="11.5" fill="#444" text-anchor="middle" >9</text>
<text x="12.5" y="397.7" font-size="11.5" fill="#444" text-anchor="middle" >10</text>
<text x="12.5" y="412.7" font-size="11.5" fill="#444" text-anchor="middle" >11</text>
<text x="12.5" y="427.7" font-size="11.5" fill="#444" text-anchor="middle" >12</text>
<text x="12.5" y="442.7" font-size="11.5" fill="#444" text-anchor="middle" >13</text>
<text x="12.5" y="457.7" font-size="11.5" fill="#444" text-anchor="middle" >14</text>
<text x="12.5" y="472.7" font-size="11.5" fill="#444" text-anchor="middle" >15</text>
<text x="12.5" y="487.7" font-size="11.5" fill="#444" text-anchor="middle" >16</text>
<text x="12.5" y="502.7" font-size="11.5" fill="#444" text-anchor="middle" >17</text>
<text x="12.5" y="517.7" font-size="11.5" fill="#444" text-anchor="middle" >18</text>
<text x="12.5" y="532.7" font-size="11.5" fill="#444" text-anchor="middle" >19</text>
<text x="12.5" y="547.7" font-size="11.5" fill="#444" text-anchor="middle" >20</text>
<text x="12.5" y="566.2" font-size="11.5" fill="#444" text-anchor="middle" >21</text>
<text x="12.5" y="581.7" font-size="11.5" fill="#444" text-anchor="middle" >22</text>
<text x="12.5" y="596.7" font-size="11.5" fill="#444" text-anchor="middle" >23</text>
<text x="12.5" y="611.7" font-size="11.5" fill="#444" text-anchor="middle" >24</text>
<text x="12.5" y="626.7" font-size="11.5" fill="#444" text-anchor="middle" >25</text>
<text x="12.5" y="641.7" font-size="11.5" fill="#444" text-anchor="middle" >26</text>
<text x="12.5" y="656.7" font-size="11.5" fill="#444" text-anchor="middle" >27</text>
<text x="12.5" y="671.7" font-size="11.5" fill="#444" text-anchor="middle" >28</text>
<rect x="0" y="204" width="25" height="1" fill="#d0d0d0" />
<rect x="25" y="204" width="1319" height="1" fill="#ababab" />
<rect x="25" y="189" width="1" height="489" fill="#ababab" />
<rect x="1344" y="204" width="1" height="475" fill="#ababab" />
<rect x="25" y="678" width="1319" height="1" fill="#ababab" />
<rect x="529" y="265" width="270" height="14" fill="#c0c0c0" />
<rect x="26" y="586" width="1247" height="14" fill="#c0c0c0" />
<g class="c">
<text x="144.5" y="215.8" font-size="12" fill="#000" font-weight="bold" textLength="245" lengthAdjust="spacingAndGlyphs" >BẢNG LƯƠNG CHI TIẾT THÁNG 04 NĂM 2016</text>
<text x="86.5" y="260.5" font-size="12" fill="#000" font-weight="bold" textLength="111.5" lengthAdjust="spacingAndGlyphs" >Ngày công quy định:</text>
<text x="271" y="260.5" font-size="12" fill="#000" text-anchor="end" font-weight="bold" textLength="14" >25</text>
<text x="314" y="260.5" font-size="12" fill="#000" font-weight="bold" >Lễ:</text>
<text x="421.0" y="260.5" font-size="12" fill="#000" text-anchor="middle" font-weight="bold" textLength="7" >1</text>
<text x="597" y="275.7" font-size="12" fill="#000" text-anchor="end" textLength="25" >20%</text>
<text x="659" y="275.7" font-size="12" fill="#000" text-anchor="end" textLength="38" >25.000</text>
<text x="728" y="275.7" font-size="12" fill="#000" text-anchor="end" textLength="38" >20.000</text>
<text x="797" y="275.7" font-size="12" fill="#000" text-anchor="end" textLength="38" >20.000</text>
<text x="54.5" y="313.98" font-size="12" fill="#000" text-anchor="middle" textLength="17" >CV</text>
<text x="112.5" y="313.98" font-size="12" fill="#000" text-anchor="middle" textLength="16" >BP</text>
<text x="176.5" y="313.98" font-size="12" fill="#000" text-anchor="middle" textLength="60" >Mức lương</text>
<text x="242.5" y="306.65" font-size="12" fill="#000" text-anchor="middle" textLength="54" >Tiền trách</text>
<text x="242.5" y="321.3" font-size="12" fill="#000" text-anchor="middle" textLength="34" >nhiệm</text>
<text x="292.5" y="299.32" font-size="12" fill="#000" text-anchor="middle" textLength="28" >Tổng</text>
<text x="292.5" y="313.97" font-size="12" fill="#000" text-anchor="middle" textLength="27" >ngày</text>
<text x="292.5" y="328.62" font-size="12" fill="#000" text-anchor="middle" textLength="27" >công</text>
<text x="348.0" y="292.0" font-size="12" fill="#000" text-anchor="middle" textLength="59" >Ngày công</text>
<text x="348.0" y="306.65" font-size="12" fill="#000" text-anchor="middle" textLength="53" >hướng  đi</text>
<text x="348.0" y="321.3" font-size="12" fill="#000" text-anchor="middle" textLength="51" >lại &amp; cơm</text>
<text x="348.0" y="335.95" font-size="12" fill="#000" text-anchor="middle" textLength="22" >trưa</text>
<text x="421.0" y="306.65" font-size="12" fill="#000" text-anchor="middle" textLength="56" >Ngày tăng</text>
<text x="421.0" y="321.3" font-size="12" fill="#000" text-anchor="middle" textLength="68" >ca trên 3 giờ</text>
<text x="493.0" y="313.98" font-size="12" fill="#000" text-anchor="middle" textLength="64" >Tổng lương</text>
<text x="564.0" y="299.32" font-size="12" fill="#000" text-anchor="middle" textLength="42" >Trợ cấp</text>
<text x="564.0" y="313.97" font-size="12" fill="#000" text-anchor="middle" textLength="54" >công trình</text>
<text x="564.0" y="328.62" font-size="12" fill="#000" text-anchor="middle" textLength="37" >xa nhà</text>
<text x="630.5" y="306.65" font-size="12" fill="#000" text-anchor="middle" textLength="52" >Chi phí đi</text>
<text x="630.5" y="321.3" font-size="12" fill="#000" text-anchor="middle" textLength="13" >lại</text>
<text x="696.0" y="306.65" font-size="12" fill="#000" text-anchor="middle" textLength="56" >Chi phí ăn</text>
<text x="696.0" y="321.3" font-size="12" fill="#000" text-anchor="middle" textLength="22" >trưa</text>
<text x="765.0" y="306.65" font-size="12" fill="#000" text-anchor="middle" textLength="51" >Tiền cơm</text>
<text x="765.0" y="321.3" font-size="12" fill="#000" text-anchor="middle" textLength="13" >tối</text>
<text x="834.0" y="306.65" font-size="12" fill="#000" text-anchor="middle" textLength="48" >Tổng thu</text>
<text x="834.0" y="321.3" font-size="12" fill="#000" text-anchor="middle" textLength="28" >nhập</text>
<text x="899.5" y="306.65" font-size="12" fill="#000" text-anchor="middle" textLength="39" >Trừ BH</text>
<text x="899.5" y="321.3" font-size="12" fill="#000" text-anchor="middle" textLength="17" >XH</text>
<text x="965.0" y="306.65" font-size="12" fill="#000" text-anchor="middle" textLength="52" >Thu nhập</text>
<text x="965.0" y="321.3" font-size="12" fill="#000" text-anchor="middle" textLength="50" >chịu thuế</text>
<text x="1030.5" y="306.65" font-size="12" fill="#000" text-anchor="middle" textLength="49" >THuế TN</text>
<text x="1030.5" y="321.3" font-size="12" fill="#000" text-anchor="middle" textLength="18" >CN</text>
<text x="1096.0" y="313.98" font-size="12" fill="#000" text-anchor="middle" textLength="49" >Tạm ứng</text>
<text x="1166.0" y="306.65" font-size="12" fill="#000" text-anchor="middle" textLength="64" >Lương thực</text>
<text x="1166.0" y="321.3" font-size="12" fill="#000" text-anchor="middle" textLength="28" >nhận</text>
<text x="1237.5" y="313.98" font-size="12" fill="#000" text-anchor="middle" textLength="45" >Ký nhận</text>
<text x="28" y="367.7" font-size="12" fill="#000" textLength="46" >Quản Lý</text>
<text x="86" y="367.7" font-size="12" fill="#000" textLength="17" >PU</text>
<text x="209" y="367.7" font-size="12" fill="#000" text-anchor="end" textLength="55" >5.000.000</text>
<text x="271" y="367.7" font-size="12" fill="#000" text-anchor="end" textLength="45" >500.000</text>
<text x="292.5" y="367.7" font-size="12" fill="#000" text-anchor="middle" textLength="24" >36,1</text>
<text x="348.0" y="367.7" font-size="12" fill="#000" text-anchor="middle" textLength="14" >26</text>
<text x="421.0" y="367.7" font-size="12" fill="#000" text-anchor="middle" textLength="7" >3</text>
<text x="526" y="367.7" font-size="12" fill="#000" text-anchor="end" textLength="55" >7.636.538</text>
<text x="597" y="367.7" font-size="12" fill="#000" text-anchor="end" textLength="55" >1.527.308</text>
<text x="659" y="367.7" font-size="12" fill="#000" text-anchor="end" textLength="45" >650.000</text>
<text x="728" y="367.7" font-size="12" fill="#000" text-anchor="end" textLength="45" >520.000</text>
<text x="797" y="367.7" font-size="12" fill="#000" text-anchor="end" textLength="38" >60.000</text>
<text x="866" y="367.7" font-size="12" fill="#000" text-anchor="end" textLength="62" >10.393.846</text>
<text x="928" y="367.7" font-size="12" fill="#000" text-anchor="end" textLength="45" >425.000</text>
<text x="997" y="367.7" font-size="12" fill="#000" text-anchor="end" textLength="55" >5.968.846</text>
<text x="1059" y="367.7" font-size="12" fill="#000" text-anchor="end" textLength="45" >346.885</text>
<text x="1128" y="367.7" font-size="12" fill="#000" text-anchor="end" textLength="55" >1.000.000</text>
<text x="1199" y="367.7" font-size="12" fill="#000" text-anchor="end" textLength="55" >8.621.961</text>
<text x="28" y="382.7" font-size="12" fill="#000" textLength="22" >Thợ</text>
<text x="86" y="382.7" font-size="12" fill="#000" textLength="17" >PU</text>
<text x="209" y="382.7" font-size="12" fill="#000" text-anchor="end" textLength="55" >3.000.000</text>
<text x="292.5" y="382.7" font-size="12" fill="#000" text-anchor="middle" textLength="24" >37,7</text>
<text x="348.0" y="382.7" font-size="12" fill="#000" text-anchor="middle" textLength="14" >27</text>
<text x="421.0" y="382.7" font-size="12" fill="#000" text-anchor="middle" textLength="7" >4</text>
<text x="526" y="382.7" font-size="12" fill="#000" text-anchor="end" textLength="55" >4.350.000</text>
<text x="597" y="382.7" font-size="12" fill="#000" text-anchor="end" textLength="45" >870.000</text>
<text x="659" y="382.7" font-size="12" fill="#000" text-anchor="end" textLength="45" >675.000</text>
<text x="728" y="382.7" font-size="12" fill="#000" text-anchor="end" textLength="45" >540.000</text>
<text x="797" y="382.7" font-size="12" fill="#000" text-anchor="end" textLength="38" >80.000</text>
<text x="866" y="382.7" font-size="12" fill="#000" text-anchor="end" textLength="55" >6.515.000</text>
<text x="928" y="382.7" font-size="12" fill="#000" text-anchor="end" textLength="45" >255.000</text>
<text x="997" y="382.7" font-size="12" fill="#000" text-anchor="end" textLength="55" >2.260.000</text>
<text x="1059" y="382.7" font-size="12" fill="#000" text-anchor="end" textLength="45" >113.000</text>
<text x="1128" y="382.7" font-size="12" fill="#000" text-anchor="end" textLength="55" >1.000.000</text>
<text x="1199" y="382.7" font-size="12" fill="#000" text-anchor="end" textLength="55" >5.147.000</text>
<text x="28" y="397.7" font-size="12" fill="#000" textLength="22" >Thợ</text>
<text x="86" y="397.7" font-size="12" fill="#000" textLength="23" >Mộc</text>
<text x="209" y="397.7" font-size="12" fill="#000" text-anchor="end" textLength="55" >3.000.000</text>
<text x="292.5" y="397.7" font-size="12" fill="#000" text-anchor="middle" textLength="24" >31,6</text>
<text x="348.0" y="397.7" font-size="12" fill="#000" text-anchor="middle" textLength="14" >26</text>
<text x="421.0" y="397.7" font-size="12" fill="#000" text-anchor="middle" textLength="7" >2</text>
<text x="526" y="397.7" font-size="12" fill="#000" text-anchor="end" textLength="55" >3.646.154</text>
<text x="597" y="397.7" font-size="12" fill="#000" text-anchor="end" textLength="45" >729.231</text>
<text x="659" y="397.7" font-size="12" fill="#000" text-anchor="end" textLength="45" >650.000</text>
<text x="728" y="397.7" font-size="12" fill="#000" text-anchor="end" textLength="45" >520.000</text>
<text x="797" y="397.7" font-size="12" fill="#000" text-anchor="end" textLength="38" >40.000</text>
<text x="866" y="397.7" font-size="12" fill="#000" text-anchor="end" textLength="55" >5.585.385</text>
<text x="928" y="397.7" font-size="12" fill="#000" text-anchor="end" textLength="45" >255.000</text>
<text x="997" y="397.7" font-size="12" fill="#000" text-anchor="end" textLength="55" >1.330.385</text>
<text x="1059" y="397.7" font-size="12" fill="#000" text-anchor="end" textLength="38" >66.519</text>
<text x="1128" y="397.7" font-size="12" fill="#000" text-anchor="end" textLength="55" >1.000.000</text>
<text x="1199" y="397.7" font-size="12" fill="#000" text-anchor="end" textLength="55" >4.263.866</text>
<text x="28" y="412.7" font-size="12" fill="#000" textLength="22" >Thợ</text>
<text x="86" y="412.7" font-size="12" fill="#000" textLength="23" >Mộc</text>
<text x="209" y="412.7" font-size="12" fill="#000" text-anchor="end" textLength="55" >3.000.000</text>
<text x="292.5" y="412.7" font-size="12" fill="#000" text-anchor="middle" textLength="24" >28,8</text>
<text x="348.0" y="412.7" font-size="12" fill="#000" text-anchor="middle" textLength="14" >25</text>
<text x="421.0" y="412.7" font-size="12" fill="#000" text-anchor="middle" textLength="7" >2</text>
<text x="526" y="412.7" font-size="12" fill="#000" text-anchor="end" textLength="55" >3.323.077</text>
<text x="597" y="412.7" font-size="12" fill="#000" text-anchor="end" textLength="45" >664.615</text>
<text x="659" y="412.7" font-size="12" fill="#000" text-anchor="end" textLength="45" >625.000</text>
<text x="728" y="412.7" font-size="12" fill="#000" text-anchor="end" textLength="45" >500.000</text>
<text x="797" y="412.7" font-size="12" fill="#000" text-anchor="end" textLength="38" >40.000</text>
<text x="866" y="412.7" font-size="12" fill="#000" text-anchor="end" textLength="55" >5.152.692</text>
<text x="928" y="412.7" font-size="12" fill="#000" text-anchor="end" textLength="45" >255.000</text>
<text x="997" y="412.7" font-size="12" fill="#000" text-anchor="end" textLength="45" >897.692</text>
<text x="1059" y="412.7" font-size="12" fill="#000" text-anchor="end" textLength="38" >44.885</text>
<text x="1128" y="412.7" font-size="12" fill="#000" text-anchor="end" textLength="55" >1.000.000</text>
<text x="1199" y="412.7" font-size="12" fill="#000" text-anchor="end" textLength="55" >3.852.807</text>
<text x="28" y="427.7" font-size="12" fill="#000" textLength="22" >Thợ</text>
<text x="86" y="427.7" font-size="12" fill="#000" textLength="23" >Mộc</text>
<text x="209" y="427.7" font-size="12" fill="#000" text-anchor="end" textLength="55" >2.000.000</text>
<text x="292.5" y="427.7" font-size="12" fill="#000" text-anchor="middle" textLength="24" >28,6</text>
<text x="348.0" y="427.7" font-size="12" fill="#000" text-anchor="middle" textLength="14" >24</text>
<text x="421.0" y="427.7" font-size="12" fill="#000" text-anchor="middle" textLength="7" >2</text>
<text x="526" y="427.7" font-size="12" fill="#000" text-anchor="end" textLength="55" >2.200.000</text>
<text x="597" y="427.7" font-size="12" fill="#000" text-anchor="end" textLength="45" >440.000</text>
<text x="659" y="427.7" font-size="12" fill="#000" text-anchor="end" textLength="45" >600.000</text>
<text x="728" y="427.7" font-size="12" fill="#000" text-anchor="end" textLength="45" >480.000</text>
<text x="797" y="427.7" font-size="12" fill="#000" text-anchor="end" textLength="38" >40.000</text>
<text x="866" y="427.7" font-size="12" fill="#000" text-anchor="end" textLength="55" >3.760.000</text>
<text x="928" y="427.7" font-size="12" fill="#000" text-anchor="end" textLength="45" >170.000</text>
<text x="997" y="427.7" font-size="12" fill="#000" text-anchor="end" textLength="7" >0</text>
<text x="1059" y="427.7" font-size="12" fill="#000" text-anchor="end" textLength="7" >0</text>
<text x="1128" y="427.7" font-size="12" fill="#000" text-anchor="end" textLength="55" >1.000.000</text>
<text x="1199" y="427.7" font-size="12" fill="#000" text-anchor="end" textLength="55" >2.590.000</text>
<text x="28" y="442.7" font-size="12" fill="#000" textLength="22" >Thợ</text>
<text x="86" y="442.7" font-size="12" fill="#000" textLength="23" >Mộc</text>
<text x="209" y="442.7" font-size="12" fill="#000" text-anchor="end" textLength="55" >2.000.000</text>
<text x="292.5" y="442.7" font-size="12" fill="#000" text-anchor="middle" textLength="24" >28,8</text>
<text x="348.0" y="442.7" font-size="12" fill="#000" text-anchor="middle" textLength="14" >25</text>
<text x="421.0" y="442.7" font-size="12" fill="#000" text-anchor="middle" textLength="7" >2</text>
<text x="526" y="442.7" font-size="12" fill="#000" text-anchor="end" textLength="55" >2.215.385</text>
<text x="597" y="442.7" font-size="12" fill="#000" text-anchor="end" textLength="45" >443.077</text>
<text x="659" y="442.7" font-size="12" fill="#000" text-anchor="end" textLength="45" >625.000</text>
<text x="728" y="442.7" font-size="12" fill="#000" text-anchor="end" textLength="45" >500.000</text>
<text x="797" y="442.7" font-size="12" fill="#000" text-anchor="end" textLength="38" >40.000</text>
<text x="866" y="442.7" font-size="12" fill="#000" text-anchor="end" textLength="55" >3.823.462</text>
<text x="928" y="442.7" font-size="12" fill="#000" text-anchor="end" textLength="45" >170.000</text>
<text x="997" y="442.7" font-size="12" fill="#000" text-anchor="end" textLength="7" >0</text>
<text x="1059" y="442.7" font-size="12" fill="#000" text-anchor="end" textLength="7" >0</text>
<text x="1128" y="442.7" font-size="12" fill="#000" text-anchor="end" textLength="55" >1.000.000</text>
<text x="1199" y="442.7" font-size="12" fill="#000" text-anchor="end" textLength="55" >2.653.462</text>
<text x="28" y="457.7" font-size="12" fill="#000" textLength="22" >Phụ</text>
<text x="86" y="457.7" font-size="12" fill="#000" textLength="17" >PU</text>
<text x="209" y="457.7" font-size="12" fill="#000" text-anchor="end" textLength="55" >3.000.000</text>
<text x="292.5" y="457.7" font-size="12" fill="#000" text-anchor="middle" textLength="24" >28,6</text>
<text x="348.0" y="457.7" font-size="12" fill="#000" text-anchor="middle" textLength="14" >25</text>
<text x="421.0" y="457.7" font-size="12" fill="#000" text-anchor="middle" textLength="7" >2</text>
<text x="526" y="457.7" font-size="12" fill="#000" text-anchor="end" textLength="55" >3.300.000</text>
<text x="597" y="457.7" font-size="12" fill="#000" text-anchor="end" textLength="45" >660.000</text>
<text x="659" y="457.7" font-size="12" fill="#000" text-anchor="end" textLength="45" >625.000</text>
<text x="728" y="457.7" font-size="12" fill="#000" text-anchor="end" textLength="45" >500.000</text>
<text x="797" y="457.7" font-size="12" fill="#000" text-anchor="end" textLength="38" >40.000</text>
<text x="866" y="457.7" font-size="12" fill="#000" text-anchor="end" textLength="55" >5.125.000</text>
<text x="928" y="457.7" font-size="12" fill="#000" text-anchor="end" textLength="45" >255.000</text>
<text x="997" y="457.7" font-size="12" fill="#000" text-anchor="end" textLength="45" >870.000</text>
<text x="1059" y="457.7" font-size="12" fill="#000" text-anchor="end" textLength="38" >43.500</text>
<text x="1128" y="457.7" font-size="12" fill="#000" text-anchor="end" textLength="55" >1.000.000</text>
<text x="1199" y="457.7" font-size="12" fill="#000" text-anchor="end" textLength="55" >3.826.500</text>
<text x="28" y="472.7" font-size="12" fill="#000" textLength="22" >Phụ</text>
<text x="86" y="472.7" font-size="12" fill="#000" textLength="17" >PU</text>
<text x="209" y="472.7" font-size="12" fill="#000" text-anchor="end" textLength="55" >3.000.000</text>
<text x="292.5" y="472.7" font-size="12" fill="#000" text-anchor="middle" textLength="24" >28,6</text>
<text x="348.0" y="472.7" font-size="12" fill="#000" text-anchor="middle" textLength="14" >25</text>
<text x="421.0" y="472.7" font-size="12" fill="#000" text-anchor="middle" textLength="7" >2</text>
<text x="526" y="472.7" font-size="12" fill="#000" text-anchor="end" textLength="55" >3.300.000</text>
<text x="597" y="472.7" font-size="12" fill="#000" text-anchor="end" textLength="45" >660.000</text>
<text x="659" y="472.7" font-size="12" fill="#000" text-anchor="end" textLength="45" >625.000</text>
<text x="728" y="472.7" font-size="12" fill="#000" text-anchor="end" textLength="45" >500.000</text>
<text x="797" y="472.7" font-size="12" fill="#000" text-anchor="end" textLength="38" >40.000</text>
<text x="866" y="472.7" font-size="12" fill="#000" text-anchor="end" textLength="55" >5.125.000</text>
<text x="928" y="472.7" font-size="12" fill="#000" text-anchor="end" textLength="45" >255.000</text>
<text x="997" y="472.7" font-size="12" fill="#000" text-anchor="end" textLength="45" >870.000</text>
<text x="1059" y="472.7" font-size="12" fill="#000" text-anchor="end" textLength="38" >43.500</text>
<text x="1128" y="472.7" font-size="12" fill="#000" text-anchor="end" textLength="55" >1.000.000</text>
<text x="1199" y="472.7" font-size="12" fill="#000" text-anchor="end" textLength="55" >3.826.500</text>
<text x="28" y="487.7" font-size="12" fill="#000" textLength="22" >Phụ</text>
<text x="86" y="487.7" font-size="12" fill="#000" textLength="23" >Mộc</text>
<text x="209" y="487.7" font-size="12" fill="#000" text-anchor="end" textLength="55" >3.000.000</text>
<text x="292.5" y="487.7" font-size="12" fill="#000" text-anchor="middle" textLength="24" >29,1</text>
<text x="348.0" y="487.7" font-size="12" fill="#000" text-anchor="middle" textLength="14" >25</text>
<text x="421.0" y="487.7" font-size="12" fill="#000" text-anchor="middle" textLength="7" >2</text>
<text x="526" y="487.7" font-size="12" fill="#000" text-anchor="end" textLength="55" >3.357.692</text>
<text x="597" y="487.7" font-size="12" fill="#000" text-anchor="end" textLength="45" >671.538</text>
<text x="659" y="487.7" font-size="12" fill="#000" text-anchor="end" textLength="45" >625.000</text>
<text x="728" y="487.7" font-size="12" fill="#000" text-anchor="end" textLength="45" >500.000</text>
<text x="797" y="487.7" font-size="12" fill="#000" text-anchor="end" textLength="38" >40.000</text>
<text x="866" y="487.7" font-size="12" fill="#000" text-anchor="end" textLength="55" >5.194.231</text>
<text x="928" y="487.7" font-size="12" fill="#000" text-anchor="end" textLength="45" >255.000</text>
<text x="997" y="487.7" font-size="12" fill="#000" text-anchor="end" textLength="45" >939.231</text>
<text x="1059" y="487.7" font-size="12" fill="#000" text-anchor="end" textLength="38" >46.962</text>
<text x="1128" y="487.7" font-size="12" fill="#000" text-anchor="end" textLength="55" >1.000.000</text>
<text x="1199" y="487.7" font-size="12" fill="#000" text-anchor="end" textLength="55" >3.892.269</text>
<text x="28" y="502.7" font-size="12" fill="#000" textLength="22" >Phụ</text>
<text x="86" y="502.7" font-size="12" fill="#000" textLength="23" >Mộc</text>
<text x="209" y="502.7" font-size="12" fill="#000" text-anchor="end" textLength="55" >3.000.000</text>
<text x="292.5" y="502.7" font-size="12" fill="#000" text-anchor="middle" textLength="24" >31,1</text>
<text x="348.0" y="502.7" font-size="12" fill="#000" text-anchor="middle" textLength="14" >26</text>
<text x="421.0" y="502.7" font-size="12" fill="#000" text-anchor="middle" textLength="7" >2</text>
<text x="526" y="502.7" font-size="12" fill="#000" text-anchor="end" textLength="55" >3.588.462</text>
<text x="597" y="502.7" font-size="12" fill="#000" text-anchor="end" textLength="45" >717.692</text>
<text x="659" y="502.7" font-size="12" fill="#000" text-anchor="end" textLength="45" >650.000</text>
<text x="728" y="502.7" font-size="12" fill="#000" text-anchor="end" textLength="45" >520.000</text>
<text x="797" y="502.7" font-size="12" fill="#000" text-anchor="end" textLength="38" >40.000</text>
<text x="866" y="502.7" font-size="12" fill="#000" text-anchor="end" textLength="55" >5.516.154</text>
<text x="928" y="502.7" font-size="12" fill="#000" text-anchor="end" textLength="45" >255.000</text>
<text x="997" y="502.7" font-size="12" fill="#000" text-anchor="end" textLength="55" >1.261.154</text>
<text x="1059" y="502.7" font-size="12" fill="#000" text-anchor="end" textLength="38" >63.058</text>
<text x="1128" y="502.7" font-size="12" fill="#000" text-anchor="end" textLength="55" >1.000.000</text>
<text x="1199" y="502.7" font-size="12" fill="#000" text-anchor="end" textLength="55" >4.198.096</text>
<text x="28" y="517.7" font-size="12" fill="#000" textLength="22" >Thợ</text>
<text x="86" y="517.7" font-size="12" fill="#000" textLength="23" >Mộc</text>
<text x="209" y="517.7" font-size="12" fill="#000" text-anchor="end" textLength="55" >5.000.000</text>
<text x="271" y="517.7" font-size="12" fill="#000" text-anchor="end" textLength="45" >500.000</text>
<text x="292.5" y="517.7" font-size="12" fill="#000" text-anchor="middle" textLength="24" >28,8</text>
<text x="348.0" y="517.7" font-size="12" fill="#000" text-anchor="middle" textLength="14" >25</text>
<text x="421.0" y="517.7" font-size="12" fill="#000" text-anchor="middle" textLength="7" >1</text>
<text x="526" y="517.7" font-size="12" fill="#000" text-anchor="end" textLength="55" >6.092.308</text>
<text x="597" y="517.7" font-size="12" fill="#000" text-anchor="end" textLength="55" >1.218.462</text>
<text x="659" y="517.7" font-size="12" fill="#000" text-anchor="end" textLength="45" >625.000</text>
<text x="728" y="517.7" font-size="12" fill="#000" text-anchor="end" textLength="45" >500.000</text>
<text x="797" y="517.7" font-size="12" fill="#000" text-anchor="end" textLength="38" >20.000</text>
<text x="866" y="517.7" font-size="12" fill="#000" text-anchor="end" textLength="55" >8.455.769</text>
<text x="928" y="517.7" font-size="12" fill="#000" text-anchor="end" textLength="45" >425.000</text>
<text x="997" y="517.7" font-size="12" fill="#000" text-anchor="end" textLength="55" >4.030.769</text>
<text x="1059" y="517.7" font-size="12" fill="#000" text-anchor="end" textLength="45" >201.538</text>
<text x="1128" y="517.7" font-size="12" fill="#000" text-anchor="end" textLength="55" >1.000.000</text>
<text x="1199" y="517.7" font-size="12" fill="#000" text-anchor="end" textLength="55" >6.829.231</text>
<text x="28" y="532.7" font-size="12" fill="#000" textLength="22" >Thợ</text>
<text x="86" y="532.7" font-size="12" fill="#000" textLength="23" >Mộc</text>
<text x="209" y="532.7" font-size="12" fill="#000" text-anchor="end" textLength="55" >3.000.000</text>
<text x="292.5" y="532.7" font-size="12" fill="#000" text-anchor="middle" textLength="24" >29,3</text>
<text x="348.0" y="532.7" font-size="12" fill="#000" text-anchor="middle" textLength="14" >24</text>
<text x="421.0" y="532.7" font-size="12" fill="#000" text-anchor="middle" textLength="7" >1</text>
<text x="526" y="532.7" font-size="12" fill="#000" text-anchor="end" textLength="55" >3.380.769</text>
<text x="597" y="532.7" font-size="12" fill="#000" text-anchor="end" textLength="45" >676.154</text>
<text x="659" y="532.7" font-size="12" fill="#000" text-anchor="end" textLength="45" >600.000</text>
<text x="728" y="532.7" font-size="12" fill="#000" text-anchor="end" textLength="45" >480.000</text>
<text x="797" y="532.7" font-size="12" fill="#000" text-anchor="end" textLength="38" >20.000</text>
<text x="866" y="532.7" font-size="12" fill="#000" text-anchor="end" textLength="55" >5.156.923</text>
<text x="928" y="532.7" font-size="12" fill="#000" text-anchor="end" textLength="45" >255.000</text>
<text x="997" y="532.7" font-size="12" fill="#000" text-anchor="end" textLength="45" >901.923</text>
<text x="1059" y="532.7" font-size="12" fill="#000" text-anchor="end" textLength="38" >45.096</text>
<text x="1128" y="532.7" font-size="12" fill="#000" text-anchor="end" textLength="55" >1.000.000</text>
<text x="1199" y="532.7" font-size="12" fill="#000" text-anchor="end" textLength="55" >3.856.827</text>
<text x="28" y="547.7" font-size="12" fill="#000" textLength="22" >Thợ</text>
<text x="86" y="547.7" font-size="12" fill="#000" textLength="23" >Mộc</text>
<text x="209" y="547.7" font-size="12" fill="#000" text-anchor="end" textLength="55" >2.000.000</text>
<text x="292.5" y="547.7" font-size="12" fill="#000" text-anchor="middle" textLength="24" >29,3</text>
<text x="348.0" y="547.7" font-size="12" fill="#000" text-anchor="middle" textLength="14" >26</text>
<text x="421.0" y="547.7" font-size="12" fill="#000" text-anchor="middle" textLength="7" >1</text>
<text x="526" y="547.7" font-size="12" fill="#000" text-anchor="end" textLength="55" >2.253.846</text>
<text x="597" y="547.7" font-size="12" fill="#000" text-anchor="end" textLength="45" >450.769</text>
<text x="659" y="547.7" font-size="12" fill="#000" text-anchor="end" textLength="45" >650.000</text>
<text x="728" y="547.7" font-size="12" fill="#000" text-anchor="end" textLength="45" >520.000</text>
<text x="797" y="547.7" font-size="12" fill="#000" text-anchor="end" textLength="38" >20.000</text>
<text x="866" y="547.7" font-size="12" fill="#000" text-anchor="end" textLength="55" >3.894.615</text>
<text x="928" y="547.7" font-size="12" fill="#000" text-anchor="end" textLength="45" >170.000</text>
<text x="997" y="547.7" font-size="12" fill="#000" text-anchor="end" textLength="7" >0</text>
<text x="1059" y="547.7" font-size="12" fill="#000" text-anchor="end" textLength="7" >0</text>
<text x="1128" y="547.7" font-size="12" fill="#000" text-anchor="end" textLength="55" >1.000.000</text>
<text x="1199" y="547.7" font-size="12" fill="#000" text-anchor="end" textLength="55" >2.724.615</text>
<text x="28" y="565.5" font-size="12" fill="#000" textLength="22" >Thợ</text>
<text x="86" y="565.5" font-size="12" fill="#000" textLength="23" >Mộc</text>
<text x="209" y="565.5" font-size="12" fill="#000" text-anchor="end" textLength="55" >2.000.000</text>
<text x="292.5" y="565.5" font-size="12" fill="#000" text-anchor="middle" textLength="24" >29,3</text>
<text x="348.0" y="565.5" font-size="12" fill="#000" text-anchor="middle" textLength="14" >26</text>
<text x="421.0" y="565.5" font-size="12" fill="#000" text-anchor="middle" textLength="7" >1</text>
<text x="526" y="565.5" font-size="12" fill="#000" text-anchor="end" textLength="55" >2.253.846</text>
<text x="597" y="565.5" font-size="12" fill="#000" text-anchor="end" textLength="45" >450.769</text>
<text x="659" y="565.5" font-size="12" fill="#000" text-anchor="end" textLength="45" >650.000</text>
<text x="728" y="565.5" font-size="12" fill="#000" text-anchor="end" textLength="45" >520.000</text>
<text x="797" y="565.5" font-size="12" fill="#000" text-anchor="end" textLength="38" >20.000</text>
<text x="866" y="565.5" font-size="12" fill="#000" text-anchor="end" textLength="55" >3.894.615</text>
<text x="928" y="565.5" font-size="12" fill="#000" text-anchor="end" textLength="45" >170.000</text>
<text x="997" y="565.5" font-size="12" fill="#000" text-anchor="end" textLength="7" >0</text>
<text x="1059" y="565.5" font-size="12" fill="#000" text-anchor="end" textLength="7" >0</text>
<text x="1128" y="565.5" font-size="12" fill="#000" text-anchor="end" textLength="55" >1.000.000</text>
<text x="1199" y="565.5" font-size="12" fill="#000" text-anchor="end" textLength="55" >2.724.615</text>
<text x="209" y="596.7" font-size="12" fill="#000" text-anchor="end" textLength="62" >42.000.000</text>
<text x="271" y="596.7" font-size="12" fill="#000" text-anchor="end" textLength="55" >1.000.000</text>
<text x="292.5" y="596.7" font-size="12" fill="#000" text-anchor="middle" textLength="31" >425,7</text>
<text x="348.0" y="596.7" font-size="12" fill="#000" text-anchor="middle" textLength="21" >355</text>
<text x="421.0" y="596.7" font-size="12" fill="#000" text-anchor="middle" textLength="14" >27</text>
<text x="526" y="596.7" font-size="12" fill="#000" text-anchor="end" textLength="62" >50.898.077</text>
<text x="597" y="596.7" font-size="12" fill="#000" text-anchor="end" textLength="62" >10.179.615</text>
<text x="659" y="596.7" font-size="12" fill="#000" text-anchor="end" textLength="55" >8.875.000</text>
<text x="728" y="596.7" font-size="12" fill="#000" text-anchor="end" textLength="55" >7.100.000</text>
<text x="797" y="596.7" font-size="12" fill="#000" text-anchor="end" textLength="45" >540.000</text>
<text x="866" y="596.7" font-size="12" fill="#000" text-anchor="end" textLength="62" >77.592.692</text>
<text x="928" y="596.7" font-size="12" fill="#000" text-anchor="end" textLength="55" >3.570.000</text>
<text x="997" y="596.7" font-size="12" fill="#000" text-anchor="end" textLength="62" >19.330.000</text>
<text x="1059" y="596.7" font-size="12" fill="#000" text-anchor="end" textLength="55" >1.014.943</text>
<text x="1128" y="596.7" font-size="12" fill="#000" text-anchor="end" textLength="62" >14.000.000</text>
<text x="1199" y="596.7" font-size="12" fill="#000" text-anchor="end" textLength="62" >59.007.749</text>
</g>
<rect x="26" y="279" width="1248" height="1" fill="#000" />
<rect x="26" y="341" width="1248" height="1" fill="#000" />
<rect x="26" y="356" width="1248" height="1" fill="#000" />
<rect x="26" y="585" width="1248" height="1" fill="#000" />
<rect x="26" y="600" width="1248" height="1" fill="#000" />
<rect x="83" y="279" width="1" height="322" fill="#000" />
<rect x="141" y="279" width="1" height="322" fill="#000" />
<rect x="211" y="279" width="1" height="322" fill="#000" />
<rect x="273" y="279" width="1" height="322" fill="#000" />
<rect x="311" y="279" width="1" height="322" fill="#000" />
<rect x="384" y="279" width="1" height="322" fill="#000" />
<rect x="457" y="279" width="1" height="322" fill="#000" />
<rect x="528" y="279" width="1" height="322" fill="#000" />
<rect x="599" y="279" width="1" height="322" fill="#000" />
<rect x="661" y="279" width="1" height="322" fill="#000" />
<rect x="730" y="279" width="1" height="322" fill="#000" />
<rect x="799" y="279" width="1" height="322" fill="#000" />
<rect x="868" y="279" width="1" height="322" fill="#000" />
<rect x="930" y="279" width="1" height="322" fill="#000" />
<rect x="999" y="279" width="1" height="322" fill="#000" />
<rect x="1061" y="279" width="1" height="322" fill="#000" />
<rect x="1130" y="279" width="1" height="322" fill="#000" />
<rect x="1201" y="279" width="1" height="322" fill="#000" />
<rect x="1273" y="279" width="1" height="322" fill="#000" />
<defs><pattern id="dA" x="0" y="0" width="2" height="1" patternUnits="userSpaceOnUse"><rect x="1" y="0" width="1" height="1" fill="#000"/></pattern><pattern id="dB" x="0" y="0" width="2" height="1" patternUnits="userSpaceOnUse"><rect x="0" y="0" width="1" height="1" fill="#000"/></pattern></defs>
<rect x="26" y="371" width="1247" height="1" fill="url(#dA)"/>
<rect x="26" y="386" width="1247" height="1" fill="url(#dB)"/>
<rect x="26" y="401" width="1247" height="1" fill="url(#dA)"/>
<rect x="26" y="416" width="1247" height="1" fill="url(#dB)"/>
<rect x="26" y="431" width="1247" height="1" fill="url(#dA)"/>
<rect x="26" y="446" width="1247" height="1" fill="url(#dB)"/>
<rect x="26" y="461" width="1247" height="1" fill="url(#dA)"/>
<rect x="26" y="476" width="1247" height="1" fill="url(#dB)"/>
<rect x="26" y="491" width="1247" height="1" fill="url(#dA)"/>
<rect x="26" y="506" width="1247" height="1" fill="url(#dB)"/>
<rect x="26" y="521" width="1247" height="1" fill="url(#dA)"/>
<rect x="26" y="536" width="1247" height="1" fill="url(#dB)"/>
<rect x="26" y="551" width="1247" height="1" fill="url(#dA)"/>
<rect x="26" y="570" width="1247" height="1" fill="url(#dB)"/>
<rect x="83" y="279" width="1" height="322" fill="#000" />
<rect x="141" y="279" width="1" height="322" fill="#000" />
<rect x="211" y="279" width="1" height="322" fill="#000" />
<rect x="273" y="279" width="1" height="322" fill="#000" />
<rect x="311" y="279" width="1" height="322" fill="#000" />
<rect x="384" y="279" width="1" height="322" fill="#000" />
<rect x="457" y="279" width="1" height="322" fill="#000" />
<rect x="528" y="279" width="1" height="322" fill="#000" />
<rect x="599" y="279" width="1" height="322" fill="#000" />
<rect x="661" y="279" width="1" height="322" fill="#000" />
<rect x="730" y="279" width="1" height="322" fill="#000" />
<rect x="799" y="279" width="1" height="322" fill="#000" />
<rect x="868" y="279" width="1" height="322" fill="#000" />
<rect x="930" y="279" width="1" height="322" fill="#000" />
<rect x="999" y="279" width="1" height="322" fill="#000" />
<rect x="1061" y="279" width="1" height="322" fill="#000" />
<rect x="1130" y="279" width="1" height="322" fill="#000" />
<rect x="1201" y="279" width="1" height="322" fill="#000" />
<rect x="1273" y="279" width="1" height="322" fill="#000" />
<rect x="599" y="570" width="63" height="1" fill="#000" />
<rect x="1345" y="189" width="21" height="490" fill="#fff" />
<rect x="1348.5" y="191.5" width="14" height="14" fill="#fff" stroke="#ababab"/>
<path d="M1352 200 L1355.5 196 L1359 200 Z" fill="#666"/>
<rect x="1348.5" y="206.5" width="14" height="440" fill="#fff" stroke="#ababab"/>
<rect x="1349" y="647" width="13" height="17" fill="#f0f0f0" />
<rect x="1348.5" y="664.5" width="14" height="14" fill="#fff" stroke="#ababab"/>
<path d="M1352 669.5 L1359 669.5 L1355.5 673.5 Z" fill="#666"/>
<rect x="0" y="679" width="1366" height="27" fill="#f3f3f3" />
<rect x="0" y="678" width="1345" height="1" fill="#c6c6c6" />
<path d="M31 687.5 L27.5 691 L31 694.5 Z" fill="#c6c6c6"/>
<path d="M56 687.5 L59.5 691 L56 694.5 Z" fill="#c6c6c6"/>
<rect x="100" y="682" width="1" height="20" fill="#c6c6c6" />
<text x="112" y="695.5" font-size="13" fill="#444" textLength="30.5" lengthAdjust="spacingAndGlyphs" >Cong</text>
<rect x="157" y="678" width="61" height="25" fill="#fff" />
<rect x="156" y="678" width="1" height="25" fill="#c6c6c6" />
<rect x="218" y="678" width="1" height="25" fill="#c6c6c6" />
<rect x="156" y="701" width="63" height="2" fill="#217346" />
<text x="168.5" y="695.5" font-size="13" fill="#217346" font-weight="bold" textLength="38" lengthAdjust="spacingAndGlyphs" >Luong</text>
<circle cx="260" cy="692" r="7.5" fill="none" stroke="#777" stroke-width="1.2"/>
<path d="M260 688 V696 M256 692 H264" stroke="#777" stroke-width="1.8"/>
<rect x="819" y="686.8" width="2" height="2" fill="#999" />
<rect x="819" y="690.9" width="2" height="2" fill="#999" />
<rect x="819" y="695" width="2" height="2" fill="#999" />
<rect x="836.5" y="685.5" width="14" height="14" fill="#fff" stroke="#ababab"/>
<path d="M845 688.5 L841 692.5 L845 696.5 Z" fill="#666"/>
<rect x="851" y="686" width="44" height="14" fill="#e6e6e6" />
<rect x="895.5" y="685.5" width="434" height="14" fill="#fff" stroke="#ababab"/>
<rect x="1330.5" y="685.5" width="14" height="14" fill="#fff" stroke="#ababab"/>
<path d="M1336 688.5 L1340 692.5 L1336 696.5 Z" fill="#666"/>
<rect x="0" y="706" width="1366" height="22" fill="#217346" />
<text x="7.5" y="721.5" font-size="12" fill="#fff" textLength="32.5" lengthAdjust="spacingAndGlyphs" >READY</text>
<rect x="1077" y="706" width="38" height="22" fill="#0f6631" />
<rect x="1089.5" y="710.5" width="12" height="12" fill="none" stroke="#fff"/>
<path d="M1093.5 710.5 V722.5 M1097.5 710.5 V722.5 M1089.5 714.5 H1101.5 M1089.5 718.5 H1101.5" stroke="#fff" fill="none"/>
<rect x="1127.5" y="710.5" width="13" height="12" fill="none" stroke="#fff"/>
<rect x="1129.5" y="712.5" width="9" height="8" fill="none" stroke="#fff"/>
<rect x="1131" y="714" width="5" height="1" fill="#fff" />
<rect x="1131" y="716" width="5" height="1" fill="#fff" />
<rect x="1131" y="718" width="5" height="1" fill="#fff" />
<rect x="1165.5" y="710.5" width="13" height="12" fill="none" stroke="#fff"/>
<rect x="1166" y="711" width="3" height="7" fill="#e8eee9" />
<rect x="1170" y="711" width="3" height="7" fill="#e8eee9" />
<rect x="1196" y="716" width="6" height="2" fill="#fff" />
<rect x="1206" y="715.5" width="100" height="1" fill="#fff" />
<rect x="1249" y="711.5" width="4" height="10" fill="#fff" />
<rect x="1256" y="713.5" width="1" height="4" fill="#fff" />
<rect x="1310" y="716" width="8" height="2" fill="#fff" />
<rect x="1313" y="713" width="2" height="8" fill="#fff" />
<text x="1332.5" y="720.5" font-size="12" fill="#fff" textLength="24.5" lengthAdjust="spacingAndGlyphs" >90 %</text>
<defs><linearGradient id="tb" x1="0" y1="0" x2="1366" y2="0" gradientUnits="userSpaceOnUse"><stop offset="0" stop-color="#1f2119"/><stop offset="0.12" stop-color="#1d1f17"/><stop offset="0.3" stop-color="#191a13"/><stop offset="0.45" stop-color="#17180f"/><stop offset="0.5" stop-color="#0f100c"/><stop offset="0.56" stop-color="#111210"/><stop offset="0.62" stop-color="#191b13"/><stop offset="0.72" stop-color="#1b1d14"/><stop offset="0.78" stop-color="#131410"/><stop offset="1" stop-color="#121310"/></linearGradient></defs>
<rect x="0" y="728" width="1366" height="40" fill="url(#tb)" />
<path d="M16 741.5 L22.5 740.5 V747.5 H16 Z M23.5 740.3 L32 739 V747.5 H23.5 Z M16 748.5 H22.5 V755.5 L16 754.5 Z M23.5 748.5 H32 V757 L23.5 755.7 Z" fill="#fff"/>
<circle cx="74.5" cy="745.5" r="5.3" fill="none" stroke="#fff" stroke-width="1.3"/>
<path d="M70.8 749.2 L64.5 755.5" stroke="#fff" stroke-width="1.5"/>
<rect x="114.5" y="741.5" width="12" height="13" fill="none" stroke="#fff" stroke-width="1.2"/>
<path d="M112 744 H110.5 V752 H112 M129 744 H130.5 V752 H129" fill="none" stroke="#fff" stroke-width="1.2"/>
<path fill-rule="evenodd" fill="#1e88e5" d="M170.6 737.2 C176.5 737.2 180.8 741.5 180.8 748 V750 H167.8 C168.3 752.5 171 754 174 754 C176 754 178 753.5 179.3 753 V757.2 C177.5 758.3 175.5 758.8 173 758.8 C167 758.8 163.2 754.5 163.2 749.5 C163.2 746 164.5 743.5 167 741.8 C164.5 742.3 162.5 744.3 161.2 746.8 C162 740.5 166 737.2 170.6 737.2 Z M167.8 745.8 C168.2 743.5 170 742.4 171.5 742.4 C173.5 742.4 175 743.6 175 745.8 Z"/>
<path d="M213.5 741.5 V739 Q213.5 736 219 736 Q224.5 736 224.5 739 V741.5" fill="none" stroke="#fff" stroke-width="1.3"/>
<path d="M208 741 H230.5 V757.5 Q230.5 759 229 759 H209.5 Q208 759 208 757.5 Z" fill="#fff"/>
<rect x="214" y="744" width="5" height="5" fill="#f25022" />
<rect x="220" y="744" width="5" height="5" fill="#7fba00" />
<rect x="214" y="750" width="5" height="5" fill="#00a4ef" />
<rect x="220" y="750" width="5" height="5" fill="#ffb900" />
<rect x="258.5" y="737.5" width="20" height="18" fill="#0b0d47" stroke="#5aa9e6" stroke-width="1"/>
<text x="261.5" y="751" font-size="11" fill="#7ab6f0" font-weight="bold" >Ps</text>
<defs><linearGradient id="ffg" x1="0.1" y1="0.8" x2="0.9" y2="0.2"><stop offset="0" stop-color="#f5156c"/><stop offset="0.35" stop-color="#ff4a2a"/><stop offset="0.7" stop-color="#ff9a1a"/><stop offset="1" stop-color="#ffd63a"/></linearGradient><linearGradient id="ffb" x1="0" y1="0" x2="0" y2="1"><stop offset="0" stop-color="#1a9bff"/><stop offset="1" stop-color="#3a2bb8"/></linearGradient></defs>
<circle cx="318" cy="748.3" r="11" fill="url(#ffg)"/>
<ellipse cx="318.5" cy="745.3" rx="5.6" ry="7.3" fill="url(#ffb)"/>
<path d="M309.5 739.5 L311.5 741 Q314.5 740 316 741.5 L317.5 743.5 Q316 744.5 315.5 746 Q316 748.5 319.5 750 Q317.5 751.5 315 751 Q312 749 312 745 Z" fill="#ff6a2a"/>
<path d="M321 736.5 Q327.5 739.5 329 746 Q329.5 752 324.5 755.5 Q326 749.5 323.5 746 Q321.5 743 321 736.5 Z" fill="#ffd93d"/>
<path d="M356 740 Q356 739 357 739 H363 L365 741 H376.5 Q377.5 741 377.5 742 V756 Q377.5 757 376.5 757 H357 Q356 757 356 756 Z" fill="#f8d775"/>
<rect x="356" y="743" width="21.5" height="14" rx="1" fill="#fde59a"/>
<path d="M360 757.5 V749.5 H374 V757.5 H370.5 V752.5 H363.5 V757.5 Z" fill="#33a3e8"/>
<ellipse cx="416.7" cy="741.6" rx="4.3" ry="4" fill="#c5ccd3"/>
<circle cx="415" cy="741.5" r="1" fill="#333"/><circle cx="418.4" cy="741.5" r="1" fill="#333"/>
<rect x="411.8" y="745.5" width="9.8" height="10.5" rx="3.5" fill="#aeb8c1"/>
<rect x="409" y="745.5" width="3" height="6" rx="1" fill="#39a0d8"/><rect x="421.5" y="745.5" width="3" height="6" rx="1" fill="#39a0d8"/>
<rect x="409.2" y="751.5" width="2.2" height="1.8" fill="#e8e8e8" />
<rect x="422" y="751.5" width="2.2" height="1.8" fill="#e8e8e8" />
<rect x="411.5" y="756.3" width="10.5" height="1.5" fill="#777" />
<path d="M452.8 744.3 L465 737.7 L477 744.3 V757.2 H452.8 Z" fill="#fff"/>
<path d="M454.3 744.3 H475.9 L471.8 753.6 L467.7 749 Z" fill="#12130f"/>
<path d="M504.8 739 H523 V757.2 H504.8 Z" fill="#fff"/>
<path d="M514 748 H522.5 L514 756.8 Z" fill="#12130f"/>
<circle cx="562.8" cy="748" r="11" fill="#1da462"/>
<path d="M553.3 742.5 A11 11 0 0 1 572.3 742.5 L562.8 742.5 Z" fill="#dd5144"/>
<path d="M553.3 742.5 A11 11 0 0 1 572.3 742.5 H562.8 L557.8 751 Z" fill="#dd5144"/>
<path d="M572.3 742.5 A11 11 0 0 1 562.8 759 L567.5 750.5 Z" fill="#ffcd46"/>
<path d="M572.3 742.5 H562.8 L567.5 750.5 L562.8 759 A11 11 0 0 0 572.3 742.5 Z" fill="#ffcd46"/>
<circle cx="562.8" cy="748" r="5" fill="#fff"/>
<circle cx="562.8" cy="748" r="3.9" fill="#4c8bf5"/>
<rect x="588" y="728" width="48" height="38" fill="#3b3c34" />
<path d="M601 738.5 L614 736.5 V759 L601 757 Z" fill="#1e7145"/>
<rect x="613.5" y="739.5" width="9" height="16" fill="#1e7145" stroke="#fff" stroke-width="1"/>
<path d="M614 743.5 H622.5 M614 747.5 H622.5 M614 751.5 H622.5 M617.5 740 V755" stroke="#fff" stroke-width="0.9"/>
<path d="M604 743 L610.5 752.5 M610.5 743 L604 752.5" stroke="#fff" stroke-width="1.8"/>
<rect x="298" y="766" width="40" height="2" fill="#f3e6b3" />
<rect x="347" y="766" width="40" height="2" fill="#f3e6b3" />
<rect x="494" y="766" width="40" height="2" fill="#f3e6b3" />
<rect x="543" y="766" width="40" height="2" fill="#f3e6b3" />
<rect x="588" y="766" width="48" height="2" fill="#f3e6b3" />
<circle cx="1090.5" cy="742" r="2.6" fill="none" stroke="#fff" stroke-width="1.1"/>
<path d="M1086.8 748.8 Q1087.5 745.5 1090.5 745.5 Q1093.5 745.5 1094.2 748.8" fill="none" stroke="#fff" stroke-width="1.1"/>
<circle cx="1084.3" cy="748" r="2.6" fill="none" stroke="#fff" stroke-width="1.1"/>
<path d="M1080.3 754.8 Q1081 751.3 1084.3 751.3 Q1087.6 751.3 1088.3 754.8" fill="none" stroke="#fff" stroke-width="1.1"/>
<path d="M1117.5 751 L1123 745 L1128.5 751" fill="none" stroke="#fff" stroke-width="1.3"/>
<path d="M1140.5 742 V745 M1142.8 742 V745 M1139.5 745.5 H1144 V747.5 Q1144 749.5 1141.7 749.5 Q1139.5 749.5 1139.5 747.5 Z M1141.7 749.5 V752.5 H1143" fill="none" stroke="#fff" stroke-width="1"/>
<rect x="1143.5" y="744.5" width="11" height="8" fill="none" stroke="#fff" stroke-width="1"/>
<rect x="1145" y="746" width="8" height="5" fill="#fff" />
<rect x="1155" y="747" width="1" height="3" fill="#fff" />
<path d="M1166.5 754 A12 12 0 0 1 1178.5 742 M1170 754 A8.5 8.5 0 0 1 1178.5 745.5 M1173.5 754 A5 5 0 0 1 1178.5 749" fill="none" stroke="#fff" stroke-width="1.1"/>
<circle cx="1178" cy="753" r="1.3" fill="#fff"/>
<path d="M1187.5 745.5 H1190.5 L1195 741.5 V755 L1190.5 751 H1187.5 Z" fill="none" stroke="#fff" stroke-width="1.1"/>
<path d="M1197.5 745.5 Q1199.5 748.3 1197.5 751 M1199.8 743.5 Q1203 748.3 1199.8 753 M1202 741.8 Q1206 748.3 1202 754.8" fill="none" stroke="#fff" stroke-width="1.1"/>
<text x="1217.5" y="743.7" font-size="12" fill="#fff" textLength="15.5" lengthAdjust="spacingAndGlyphs" >VIE</text>
<text x="1218.5" y="761.2" font-size="12" fill="#fff" textLength="13.5" lengthAdjust="spacingAndGlyphs" >US</text>
<text x="1259" y="743.7" font-size="12" fill="#fff" textLength="37.5" lengthAdjust="spacingAndGlyphs" >9:09 SA</text>
<text x="1249" y="761.2" font-size="12" fill="#fff" textLength="58.5" lengthAdjust="spacingAndGlyphs" >24/03/2018</text>
<path d="M1325 740.5 H1341 V751.5 H1332 L1328 755 V751.5 H1325 Z" fill="#fff"/>
<path d="M1328 744h10M1328 746.5h10M1328 749h7" stroke="#1a1b13" stroke-width="1"/>
<circle cx="1340.5" cy="755" r="8" fill="#3a3a3a" stroke="#1a1b13" stroke-width="1.2"/>
<text x="1340.5" y="759.5" font-size="11" fill="#fff" text-anchor="middle" font-weight="bold" >1</text>
<rect x="1361" y="728" width="1" height="40" fill="#3a3b33" />
</svg>
</body></html>
